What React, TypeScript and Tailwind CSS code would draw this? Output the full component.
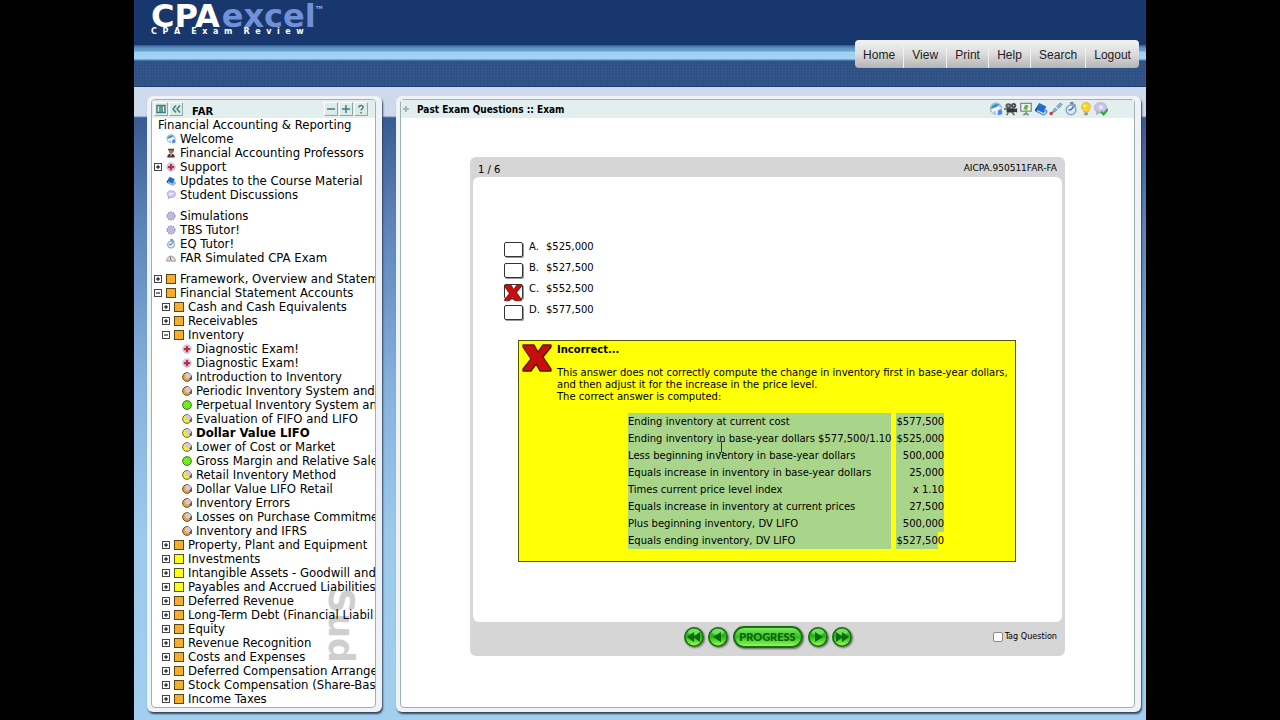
import React from "react";

type IconName =
  | "globe" | "prof" | "cross" | "book" | "chat" | "gear" | "watch" | "gauge"
  | "orange" | "yellow" | "dotOrange" | "dotYellow" | "dotGreen" | "camera" | "board" | "pen" | "bulb" | "discuss";

function Icon({ name, size = 10 }: { name: IconName; size?: number }) {
  const art: Record<IconName, React.ReactNode> = {
    globe: (
      <>
        <circle cx="8" cy="7.5" r="6.5" fill="#a9cde6" stroke="#86abc8" />
        <path d="M2 8l6-5.500 6 5v7H8v-4H5v3z" fill="#eef6fc" />
        <path d="M2 8C3 3 8 1 12 3L8 6z" fill="#3c8dc4" />
        <path d="M10 10l3-2 2 2v4l-5 1z" fill="#5d83dc" />
      </>
    ),
    prof: (
      <>
        <path d="M3 1h10l-1 5H5z" fill="#5a3a3a" />
        <circle cx="8" cy="6" r="3.4" fill="#a07064" />
        <path d="M2 15c0-5 3-6 6-6s6 1 6 6z" fill="#4d3336" />
        <path d="M6.500 9h3L8 14z" fill="#e3c8c0" />
      </>
    ),
    cross: (
      <>
        <circle cx="8" cy="8" r="7" fill="#ccd6ee" stroke="#b3bfdb" />
        <path d="M6.200 3h3.600v3.200H13v3.600H9.800V13H6.200V9.800H3V6.200h3.200z" fill="#c62a3f" />
      </>
    ),
    book: (
      <>
        <path d="M6 1l8 4-3 7-9-4z" fill="#1d6fd0" />
        <path d="M2 8l9 4 3-3 1 3-4 3-8-4z" fill="#b9d7f2" stroke="#185196" strokeWidth=".8" />
        <path d="M6 1L2 8l-1 1 1 2 1 0 0-3z" fill="#0f4590" />
      </>
    ),
    chat: (
      <>
        <ellipse cx="8.500" cy="6.500" rx="6.500" ry="5.500" fill="#cfc8ee" stroke="#9d95cc" />
        <path d="M4 10l-1 5 5-4z" fill="#a9a0d6" />
        <path d="M5 5.500h7M5 8h5" stroke="#fff" strokeWidth="1.200" />
      </>
    ),
    gear: (
      <>
        <circle cx="8" cy="8" r="6" fill="#b7b3dc" stroke="#9490c2" strokeWidth="2.500" strokeDasharray="2.400 1.400" />
        <circle cx="8" cy="8" r="5" fill="#c4c0e4" />
        <circle cx="8" cy="8" r="2" fill="#eeedf8" stroke="#8a86b8" />
      </>
    ),
    watch: (
      <>
        <path d="M7 0h4v3H7zM12 2l2 2-1 1-2-2z" fill="#75879a" />
        <circle cx="8" cy="9" r="5.600" fill="#dbe9f5" stroke="#8ba4bb" strokeWidth="1.600" />
        <path d="M8 9l3-4M8 9H5" stroke="#2c6fa8" strokeWidth="1.500" />
      </>
    ),
    gauge: (
      <>
        <path d="M1 13a7 8 0 0 1 14 0z" fill="#e7e5ee" stroke="#88849a" strokeWidth="1.300" />
        <path d="M8 12L6.500 6" stroke="#8b3f4a" strokeWidth="1.500" />
        <path d="M4 11h1M11 11h1M10 8l1-1" stroke="#666" />
      </>
    ),
    orange: <rect x=".8" y=".8" width="14.400" height="14.400" fill="#f5ae2c" stroke="#5c4310" strokeWidth="1.600" />,
    yellow: <rect x=".8" y=".8" width="14.400" height="14.400" fill="#fdfd14" stroke="#55550c" strokeWidth="1.600" />,
    dotOrange: (
      <>
        <circle cx="8" cy="8" r="7" fill="#eda33a" stroke="#5e4630" strokeWidth="1.500" />
        <circle cx="9.500" cy="6" r="4.500" fill="#cfc9e6" />
        <path d="M11.500 11l4-5v7z" fill="#4d4468" />
      </>
    ),
    dotYellow: (
      <>
        <circle cx="8" cy="8" r="7" fill="#f4f21c" stroke="#5f5e33" strokeWidth="1.500" />
        <circle cx="9.500" cy="6" r="4.500" fill="#cfc9e6" />
        <path d="M11.500 11l4-5v7z" fill="#4d4468" />
      </>
    ),
    dotGreen: <circle cx="8" cy="8" r="7" fill="#6df01c" stroke="#32701a" strokeWidth="1.500" />,
    camera: (
      <>
        <circle cx="5" cy="4.500" r="3.200" fill="#555a60" />
        <circle cx="11" cy="4" r="3" fill="#444a50" />
        <path d="M3 7h9v5H3zM12 8l3-1v5l-3-1z" fill="#33373c" />
        <path d="M0 8h3M5 12l-2 3M9 12l3 3" stroke="#555" strokeWidth="1.500" />
        <circle cx="5" cy="4.500" r="1" fill="#bbb" />
        <circle cx="11" cy="4" r="1" fill="#bbb" />
      </>
    ),
    board: (
      <>
        <path d="M2 1.500h12v9H2z" fill="#eef4ee" stroke="#7e8c86" strokeWidth="1.500" />
        <path d="M8 10.500V13M5 15l3-2 3 2" stroke="#6f7a75" strokeWidth="1.500" fill="none" />
        <path d="M5 8l2-5 4 1-2 5z" fill="#62b53a" />
      </>
    ),
    pen: (
      <>
        <path d="M13 1l2 2-8 8-3 1 1-3z" fill="#8fb8dd" stroke="#567da6" strokeWidth=".9" />
        <path d="M7 5l4 4" stroke="#e9f3fb" strokeWidth="1.500" />
        <circle cx="2.500" cy="13" r="2" fill="#c93a2f" />
      </>
    ),
    bulb: (
      <>
        <path d="M8 .5a5 5 0 0 1 3 9l-.5 2h-5L5 9.500a5 5 0 0 1 3-9z" fill="#fcd430" stroke="#dda60f" strokeWidth=".8" />
        <path d="M6 12h4v3H6z" fill="#8f949b" />
        <circle cx="6.500" cy="4.500" r="1.500" fill="#fff3b0" />
      </>
    ),
    discuss: (
      <>
        <ellipse cx="7.500" cy="6.500" rx="7" ry="6" fill="#c9c1e8" stroke="#b3abd6" strokeWidth=".9" />
        <path d="M3 10l-1 5 5-3z" fill="#b0a6da" />
        <circle cx="8" cy="6" r="2.500" fill="#e6e2f6" />
        <path d="M8 11l3 3 5-6" stroke="#38a838" strokeWidth="2.600" fill="none" />
      </>
    ),
  };
  return (
    <svg width={size} height={size} viewBox="0 0 16 16" className="shrink-0" aria-hidden="true">
      {art[name]}
    </svg>
  );
}

type Row = { text: string; icon: IconName; level?: 0 | 1 | 2; toggle?: "+" | "-"; bold?: boolean };

const intro: Row[] = [
  { text: "Welcome", icon: "globe" },
  { text: "Financial Accounting Professors", icon: "prof" },
  { text: "Support", icon: "cross", toggle: "+" },
  { text: "Updates to the Course Material", icon: "book" },
  { text: "Student Discussions", icon: "chat" },
];

const practice: Row[] = [
  { text: "Simulations", icon: "gear" },
  { text: "TBS Tutor!", icon: "gear" },
  { text: "EQ Tutor!", icon: "watch" },
  { text: "FAR Simulated CPA Exam", icon: "gauge" },
];

const lessons: Row[] = [
  { text: "Framework, Overview and Statem", icon: "orange", toggle: "+" },
  { text: "Financial Statement Accounts", icon: "orange", toggle: "-" },
  { text: "Cash and Cash Equivalents", icon: "orange", toggle: "+", level: 1 },
  { text: "Receivables", icon: "orange", toggle: "+", level: 1 },
  { text: "Inventory", icon: "orange", toggle: "-", level: 1 },
  { text: "Diagnostic Exam!", icon: "cross", level: 2 },
  { text: "Diagnostic Exam!", icon: "cross", level: 2 },
  { text: "Introduction to Inventory", icon: "dotOrange", level: 2 },
  { text: "Periodic Inventory System and", icon: "dotOrange", level: 2 },
  { text: "Perpetual Inventory System an", icon: "dotGreen", level: 2 },
  { text: "Evaluation of FIFO and LIFO", icon: "dotYellow", level: 2 },
  { text: "Dollar Value LIFO", icon: "dotYellow", level: 2, bold: true },
  { text: "Lower of Cost or Market", icon: "dotYellow", level: 2 },
  { text: "Gross Margin and Relative Sale", icon: "dotGreen", level: 2 },
  { text: "Retail Inventory Method", icon: "dotYellow", level: 2 },
  { text: "Dollar Value LIFO Retail", icon: "dotOrange", level: 2 },
  { text: "Inventory Errors", icon: "dotOrange", level: 2 },
  { text: "Losses on Purchase Commitme", icon: "dotOrange", level: 2 },
  { text: "Inventory and IFRS", icon: "dotOrange", level: 2 },
  { text: "Property, Plant and Equipment", icon: "orange", toggle: "+", level: 1 },
  { text: "Investments", icon: "yellow", toggle: "+", level: 1 },
  { text: "Intangible Assets - Goodwill and", icon: "yellow", toggle: "+", level: 1 },
  { text: "Payables and Accrued Liabilities", icon: "yellow", toggle: "+", level: 1 },
  { text: "Deferred Revenue", icon: "orange", toggle: "+", level: 1 },
  { text: "Long-Term Debt (Financial Liabil", icon: "orange", toggle: "+", level: 1 },
  { text: "Equity", icon: "orange", toggle: "+", level: 1 },
  { text: "Revenue Recognition", icon: "orange", toggle: "+", level: 1 },
  { text: "Costs and Expenses", icon: "orange", toggle: "+", level: 1 },
  { text: "Deferred Compensation Arrange", icon: "orange", toggle: "+", level: 1 },
  { text: "Stock Compensation (Share-Bas", icon: "orange", toggle: "+", level: 1 },
  { text: "Income Taxes", icon: "orange", toggle: "+", level: 1 },
  { text: "Specific Transactions, Events and", icon: "orange" },
];

const indent = ["pl-0.5", "pl-2.5", "pl-4.5"];

function Tree({ rows }: { rows: Row[] }) {
  return (
    <ul className="mb-[7px]">
      {rows.map((r, i) => (
        <li key={i} className={`flex h-3.5 items-center gap-1 whitespace-nowrap ${indent[r.level ?? 0]}`}>
          {r.toggle ? (
            <button aria-label={`Toggle ${r.text}`} className="size-2 shrink-0">
              <svg width="8" height="8" viewBox="0 0 8 8" className="block" aria-hidden="true">
                <rect x=".5" y=".5" width="7" height="7" fill="#fff" stroke="#444" />
                <path d={r.toggle === "+" ? "M2 4h4M4 2v4" : "M2 4h4"} stroke="#000" />
              </svg>
            </button>
          ) : (
            <span className="w-2 shrink-0" />
          )}
          <a href="#" className={`flex items-center gap-1 ${r.bold ? "font-bold" : ""}`}>
            <Icon name={r.icon} />
            {r.text}
          </a>
        </li>
      ))}
    </ul>
  );
}

function TinyButton({ label, path }: { label: string; path: string }) {
  return (
    <button
      aria-label={label}
      className="flex size-3.5 items-center justify-center border border-t-white border-l-white border-r-[#8fa8a6] border-b-[#8fa8a6] bg-[#dcebe8]"
    >
      <svg width="10" height="10" viewBox="0 0 10 10" fill="none" stroke="#3f7f78" strokeWidth="1.500" aria-hidden="true">
        <path d={path} />
      </svg>
    </button>
  );
}

function RedX({ size }: { size: number }) {
  return (
    <svg width={size} height={size} viewBox="0 0 30 30" aria-hidden="true" className="block shrink-0">
      <path
        d="M1 2h11l4 7 5-7h8v2l-8 10 8 12v2H18l-4-7-5 7H1v-2l8-10L1 4z"
        fill="#c80d0d"
        stroke="#5c1208"
        strokeWidth="1.300"
        strokeLinejoin="round"
      />
    </svg>
  );
}

const answers = [
  ["A.", "$525,000"],
  ["B.", "$527,500"],
  ["C.", "$552,500"],
  ["D.", "$577,500"],
];

const computation = [
  ["Ending inventory at current cost", "$577,500"],
  ["Ending inventory in base-year dollars $577,500/1.10", "$525,000"],
  ["Less beginning inventory in base-year dollars", "500,000"],
  ["Equals increase in inventory in base-year dollars", "25,000"],
  ["Times current price level index", "x 1.10"],
  ["Equals increase in inventory at current prices", "27,500"],
  ["Plus beginning inventory, DV LIFO", "500,000"],
];

function RoundButton({ label, path }: { label: string; path: string }) {
  return (
    <button aria-label={label} className="size-5 rounded-full shadow-[1px_1px_2px_#666]">
      <svg width="20" height="20" viewBox="0 0 20 20" aria-hidden="true">
        <circle cx="10" cy="10" r="9.200" fill="url(#green)" stroke="#15670f" strokeWidth="1.600" />
        <ellipse cx="10" cy="5" rx="6" ry="3" fill="#b9ff9c" opacity=".45" />
        <path d={path} fill="#0d6b10" />
      </svg>
    </button>
  );
}

const tools: [IconName, string][] = [
  ["globe", "Home page"],
  ["camera", "Video"],
  ["board", "Slides"],
  ["book", "Text"],
  ["pen", "Notes"],
  ["watch", "Timer"],
  ["bulb", "Hints"],
  ["discuss", "Discuss"],
];

const panel = "rounded-md bg-[#eff2f6] shadow-[1px_2px_2px_#33445d]";

export default function App() {
  return (
    <div className="h-screen overflow-hidden bg-black font-['DejaVu_Sans',Verdana,sans-serif] text-black">
      <svg width="0" height="0" className="absolute" aria-hidden="true">
        <defs>
          <linearGradient id="green" x1="0" y1="0" x2="0" y2="1">
            <stop offset="0" stopColor="#54d43a" />
            <stop offset=".45" stopColor="#22b315" />
            <stop offset="1" stopColor="#9dff5a" />
          </linearGradient>
        </defs>
      </svg>
      <div className="mx-auto flex h-full max-w-[1012px] flex-col">
        <header className="relative shrink-0">
          <div className="h-[45px] bg-[#18376c] pl-[17px]">
            <div className="flex items-start text-[32px] leading-8 font-bold">
              <span className="text-white">CPA</span>
              <span className="ml-0.5 text-[#7091d8]">excel</span>
              <span className="mt-1.5 text-[4px] leading-1 text-[#9db4e4]">TM</span>
            </div>
            <div className="-mt-1 text-[8px] leading-2 font-bold whitespace-pre text-white">
              C  P  A    E  x  a  m    R  e  v  i  e  w
            </div>
          </div>
          <div className="h-[17px] bg-[linear-gradient(#2e5a94_0,#5f93c2_3px,#6ba2d0_6px,#9fd0f2_7px,#a4d4f5_14px,#5181b4_15px,#24487e_17px)]" />
          <div className="h-[25px] border-b border-[#1f3f74] bg-[#2f5389] bg-[repeating-linear-gradient(90deg,#ffffff08_0_1px,transparent_1px_3px),repeating-linear-gradient(#00000010_0_1px,transparent_1px_3px)]" />
          <nav className="absolute top-10 right-[7px] flex h-7 w-[284px] rounded-sm bg-linear-to-b from-[#f3f3f3] via-[#dcdcdc] to-[#b4b4b4] font-['Liberation_Sans',Arial,sans-serif] text-xs text-[#222]">
            {["Home", "View", "Print", "Help", "Search", "Logout"].map((m) => (
              <a key={m} href="#" className="flex flex-auto items-center justify-center border-l border-[#efefef] pt-0.5 first:border-l-0">
                {m}
              </a>
            ))}
          </nav>
        </header>

        <div className="flex min-h-0 flex-1 gap-3.5 bg-[linear-gradient(#cfd9ec_0,#cfd9ec_29px,#6c86b4_30px,#385a93_31px,#5b82b8_130px,#86b2de_300px,#9ccaec_450px,#a2cfee_100%)] pt-[9px] pr-[5px] pb-2 pl-[13px]">
          <aside className={`flex w-[235px] shrink-0 flex-col pt-[3px] pr-1.5 pb-1 pl-1 ${panel}`}>
            <div className="relative flex min-h-0 flex-1 flex-col overflow-hidden rounded-sm border border-[#9fb0b4] bg-white">
              <div className="flex h-[18px] shrink-0 items-center gap-px bg-[#e3eeef] px-0.5">
                <TinyButton label="Columns" path="M1 1.500h8v7H1zM4 1.500v7M6 1.500v7" />
                <TinyButton label="Collapse" path="M5 1.500L2 5l3 3.500M9 1.500L6 5l3 3.500" />
                <h2 className="ml-2 flex-1 pt-1 text-[10px] font-bold">FAR</h2>
                <TinyButton label="Collapse all" path="M1 5h8" />
                <TinyButton label="Expand all" path="M1 5h8M5 1v8" />
                <TinyButton label="Help" path="M3 3.500C3 .5 7.500 1 7 3.500 7 5 5 5 5 6.500M5 8v1.500" />
                <span className="w-1" />
              </div>
              <div className="relative min-h-0 flex-1 overflow-hidden font-['DejaVu_Sans_Condensed','DejaVu_Sans',Verdana,sans-serif] text-[13px] leading-3.5">
                <div className="absolute right-4.5 bottom-11 font-['DejaVu_Sans',Verdana,sans-serif] text-[35px] leading-8 font-bold text-[#cfcfcf] [writing-mode:vertical-rl]">
                  Sud
                </div>
                <div className="relative">
                  <div className="pl-1.5 whitespace-nowrap">Financial Accounting &amp; Reporting</div>
                  <Tree rows={intro} />
                  <Tree rows={practice} />
                  <Tree rows={lessons} />
                </div>
              </div>
            </div>
          </aside>

          <main className={`flex min-w-0 flex-1 flex-col pt-[3px] pr-1.5 pb-1 pl-1 ${panel}`}>
            <div className="flex flex-1 flex-col rounded-sm border border-[#9fb0b4] bg-white">
              <div className="flex h-[18px] shrink-0 items-center bg-[#e3eeef] pr-[26px] pl-0.5">
                <svg width="6" height="6" viewBox="0 0 6 6" aria-hidden="true">
                  <path d="M3 0v6M0 3h6" stroke="#9db9b8" strokeWidth="2" />
                </svg>
                <h1 className="ml-2 flex-1 font-['DejaVu_Sans_Condensed','DejaVu_Sans',Tahoma,sans-serif] text-[10px] font-bold">
                  Past Exam Questions :: Exam
                </h1>
                <div className="flex gap-px">
                  {tools.map(([n, label]) => (
                    <button key={label} aria-label={label}>
                      <Icon name={n} size={14} />
                    </button>
                  ))}
                </div>
              </div>

              <section className="mx-auto mt-[39px] w-full max-w-[595px] rounded-md bg-[#d6d6d6] px-[3px] text-[10px]">
                <div className="flex h-5 items-center justify-between px-[5px] pt-1">
                  <span>1 / 6</span>
                  <span className="text-[9px]">AICPA.950511FAR-FA</span>
                </div>
                <div className="rounded-md bg-white pt-[62px] pr-[46px] pb-[60px] pl-[31px]">
                  <div role="radiogroup" aria-label="Answers">
                    {answers.map(([letter, amount], i) => (
                      <label key={letter} className="flex h-[21px] items-start">
                        <span className="relative mt-[3px] h-4 w-5">
                          <input
                            type="radio"
                            name="answer"
                            defaultChecked={i === 2}
                            className="block h-[15px] w-[19px] appearance-none rounded-xs border border-[#333] bg-white shadow-[1px_1px_0_#999]"
                          />
                          {i === 2 && (
                            <span className="absolute top-0 left-0">
                              <RedX size={18} />
                            </span>
                          )}
                        </span>
                        <span className="ml-[5px] w-[17px] leading-4">{letter}</span>
                        <span className="leading-4">{amount}</span>
                      </label>
                    ))}
                  </div>

                  <div className="mt-[17px] ml-3.5 flex items-start border border-[#55550c] bg-[#ffff05] pt-0.5 pb-3 pl-[3px] leading-3">
                    <RedX size={30} />
                    <div className="ml-[5px] min-w-0 flex-1 pt-px">
                      <h3 className="font-bold">Incorrect...</h3>
                      <p className="mt-[11px]">
                        This answer does not correctly compute the change in inventory first in base-year dollars,
                        <br />
                        and then adjust it for the increase in the price level.
                        <br />
                        The correct answer is computed:
                      </p>
                      <div className="relative mt-2.5 ml-[71px]">
                        <table className="border-collapse">
                          <tbody>
                            {computation.map(([k, v]) => (
                              <tr key={k} className="h-[17px]">
                                <td className="w-[260px] bg-[#a9d58b] p-0 whitespace-nowrap">{k}</td>
                                <td className="w-[5px] p-0" />
                                <td className="bg-[#a9d58b] p-0 text-right whitespace-nowrap">{v}</td>
                              </tr>
                            ))}
                            <tr className="h-[17px]">
                              <td className="bg-[#a9d58b] p-0">Equals ending inventory, DV LIFO</td>
                              <td className="p-0" />
                              <td className="bg-[#a9d58b] p-0 text-right">
                                $527,50<span className="inline-block bg-[#ffff05] leading-[17px]">0</span>
                              </td>
                            </tr>
                          </tbody>
                        </table>
                        <svg width="7" height="12" viewBox="0 0 7 12" className="absolute top-7 left-[90px]" aria-hidden="true">
                          <path d="M1 .5h2l.5.5.5-.5h2M3.500 1v10M1 11.500h2l.5-.5.5.5h2" stroke="#333" fill="none" />
                        </svg>
                      </div>
                    </div>
                  </div>
                </div>
                <div className="grid h-[34px] grid-cols-[1fr_auto_1fr] items-center px-[5px] pb-1">
                  <span />
                  <div className="flex items-center gap-1">
                    <RoundButton label="First" path="M10 5v10l-7-5zM16 5v10l-7-5z" />
                    <RoundButton label="Previous" path="M13 5v10l-8-5z" />
                    <button className="mx-px h-[22px] w-[70px] rounded-full border-2 border-[#17700f] bg-linear-to-b from-[#7bea5c] via-[#2cc01c] to-[#8dfb50] font-['Lato',sans-serif] text-[11px] leading-3 font-black text-[#0d5c10] shadow-[1px_1px_2px_#666]">
                      PROGRESS
                    </button>
                    <RoundButton label="Next" path="M7 5v10l8-5z" />
                    <RoundButton label="Last" path="M4 5v10l7-5zM10 5v10l7-5z" />
                  </div>
                  <label className="flex items-center justify-end gap-0.5 font-['DejaVu_Sans_Condensed','DejaVu_Sans',Tahoma,sans-serif] text-[9px]">
                    <input
                      type="checkbox"
                      className="size-2.5 appearance-none rounded-xs border border-[#8a8a8a] bg-white"
                    />
                    Tag Question
                  </label>
                </div>
              </section>
            </div>
          </main>
        </div>
      </div>
    </div>
  );
}
